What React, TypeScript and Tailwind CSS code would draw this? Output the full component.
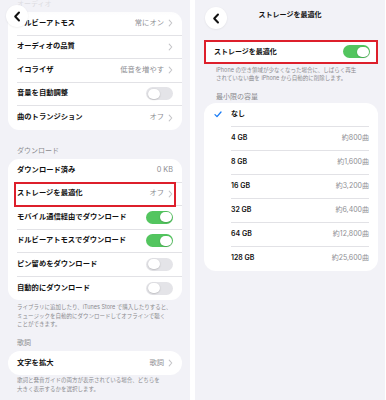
import React from "react";

const font = {
  fontFamily: '"Inter", "Noto Sans CJK JP", sans-serif',
};

const Toggle = ({ on }: { on: boolean }) => (
  <div
    className={`flex h-[13px] w-[27px] items-center rounded-full p-[1.5px] ${
      on ? "justify-end bg-[#53c55f]" : "justify-start bg-[#e4e4e8]"
    }`}
  >
    <div className="h-[10px] w-[12px] rounded-full bg-white shadow-[0_0.5px_1.5px_rgba(0,0,0,0.25)]" />
  </div>
);

const Chevron = () => (
  <svg width="5" height="8" viewBox="0 0 5 8" className="ml-[4px]">
    <path d="M1.2 1.2L3.8 4L1.2 6.8" fill="none" stroke="#c4c4c8" strokeWidth="1.1" strokeLinecap="round" strokeLinejoin="round" />
  </svg>
);

const BackButton = () => (
  <div className="flex h-[22px] w-[22px] items-center justify-center rounded-full bg-white shadow-[0_0.5px_2px_rgba(0,0,0,0.08)]">
    <svg width="8" height="11" viewBox="0 0 8 11">
      <path d="M6 1.5L2.2 5.5L6 9.5" fill="none" stroke="#111" strokeWidth="2" strokeLinecap="round" strokeLinejoin="round" />
    </svg>
  </div>
);

interface RowProps {
  label: string;
  value?: string;
  chevron?: boolean;
  toggle?: boolean;
  on?: boolean;
  last?: boolean;
  marked?: boolean;
}

const Row: React.FC<RowProps> = ({ label, value, chevron, toggle, on, last, marked }) => (
  <div className="relative flex h-[23.5px] items-stretch pl-[9px]">
    <div
      className={`flex flex-1 items-center pr-[9px] ${
        last ? "" : "border-b-[0.5px] border-[#e2e2e6]"
      }`}
    >
      <span className="flex-1 text-[7.3px] font-semibold text-[#111]">{label}</span>
      {value && <span className="text-[7.3px] text-[#8e8e93]">{value}</span>}
      {chevron && <Chevron />}
      {toggle && <Toggle on={!!on} />}
    </div>
    {marked && (
      <div className="absolute inset-y-[-0.5px] left-[6px] right-[6px] border-2 border-[#dd1f2b]" />
    )}
  </div>
);

const Header = ({ children, className }: { children: React.ReactNode; className: string }) => (
  <div className={`flex items-end px-[17px] text-[7px] leading-[8px] text-[#8a8a8e] ${className}`}>
    {children}
  </div>
);

const Note = ({ lines, className }: { lines: string[]; className: string }) => (
  <div className={`text-[5.5px] leading-[8.5px] text-[#8a8a8e] ${className}`}>
    {lines.map((l) => (
      <div key={l} className="whitespace-nowrap">
        {l}
      </div>
    ))}
  </div>
);

const sizes = [
  ["4 GB", "約800曲"],
  ["8 GB", "約1,600曲"],
  ["16 GB", "約3,200曲"],
  ["32 GB", "約6,400曲"],
  ["64 GB", "約12,800曲"],
  ["128 GB", "約25,600曲"],
];

const LeftScreen = () => (
  <div className="relative h-full w-[190px] overflow-hidden bg-[#f2f2f7]">
    <div className="h-[12px] px-[17px] text-[7px] leading-[8px] text-[#c2c2c6]">オーディオ</div>
    <div className="mx-[8px] overflow-hidden rounded-[11px] bg-white">
      <Row label="ドルビーアトモス" value="常にオン" chevron />
      <Row label="オーディオの品質" chevron />
      <Row label="イコライザ" value="低音を増やす" chevron />
      <Row label="音量を自動調整" toggle />
      <Row label="曲のトランジション" value="オフ" chevron last />
    </div>

    <Header className="h-[29.5px] pb-[4px]">ダウンロード</Header>
    <div className="mx-[8px] rounded-[11px] bg-white">
      <Row label="ダウンロード済み" value="0 KB" />
      <Row label="ストレージを最適化" value="オフ" chevron marked />
      <Row label="モバイル通信経由でダウンロード" toggle on />
      <Row label="ドルビーアトモスでダウンロード" toggle on />
      <Row label="ピン留めをダウンロード" toggle />
      <Row label="自動的にダウンロード" toggle last />
    </div>
    <Note
      className="px-[17px] pt-[3px]"
      lines={[
        "ライブラリに追加したり、iTunes Store で購入したりすると、",
        "ミュージックを自動的にダウンロードしてオフラインで聴く",
        "ことができます。",
      ]}
    />

    <Header className="h-[22.5px] pb-[4px]">歌詞</Header>
    <div className="mx-[8px] rounded-[12px] bg-white">
      <div className="flex h-[24px] items-center px-[9px]">
        <span className="flex-1 text-[7.3px] font-semibold text-[#111]">文字を拡大</span>
        <span className="text-[7.3px] text-[#8e8e93]">歌詞</span>
        <Chevron />
      </div>
    </div>
    <Note
      className="px-[17px] pt-[1px]"
      lines={[
        "歌詞と発音ガイドの両方が表示されている場合、どちらを",
        "大きく表示するかを選択します。",
      ]}
    />

    <div className="absolute inset-x-0 top-0 h-[16px] bg-gradient-to-b from-[#f2f2f7]/70 to-transparent" />
    <div className="absolute left-[6px] top-[5px]">
      <BackButton />
    </div>
  </div>
);

const RightScreen = () => (
  <div className="h-full w-[190px] overflow-hidden bg-[#f2f2f7]">
    <div className="flex h-[40px] items-start">
      <div className="ml-[10px] mt-[7px]">
        <BackButton />
      </div>
      <div className="mt-[11px] flex-1 pr-[32px] text-center text-[7px] font-semibold leading-[8px] text-[#111]">
        ストレージを最適化
      </div>
    </div>

    <div className="ml-[9px] mr-[7px] flex h-[23.5px] items-center border-2 border-[#dd1f2b] bg-white pl-[8px] pr-[6px]">
      <span className="flex-1 text-[7px] font-semibold text-[#111]">ストレージを最適化</span>
      <Toggle on />
    </div>
    <Note
      className="pl-[21px] pt-[2.5px] leading-[8px]"
      lines={[
        "iPhone の空き領域が少なくなった場合に、しばらく再生",
        "されていない曲を iPhone から自動的に削除します。",
      ]}
    />

    <div className="mt-[10.5px] pl-[21px] text-[7px] leading-[8px] text-[#8a8a8e]">最小限の容量</div>

    <div className="ml-[9px] mr-[7px] mt-[2px] rounded-[12px] bg-white">
      <div className="flex h-[24px] items-center">
        <div className="flex w-[27px] justify-center pl-[1px]">
          <svg width="8" height="7" viewBox="0 0 8 7">
            <path d="M1 3.6L3 5.6L7 1" fill="none" stroke="#1a7cf5" strokeWidth="1.3" strokeLinecap="round" strokeLinejoin="round" />
          </svg>
        </div>
        <div className="flex h-full flex-1 items-center border-b-[0.5px] border-[#e2e2e6] mr-[9px]">
          <span className="text-[7px] font-semibold text-[#111]">なし</span>
        </div>
      </div>
      {sizes.map(([size, songs], i) => (
        <div key={size} className="flex h-[24px] items-center pl-[27px]">
          <div
            className={`flex h-full flex-1 items-center mr-[9px] ${
              i === sizes.length - 1 ? "" : "border-b-[0.5px] border-[#e2e2e6]"
            }`}
          >
            <span className="flex-1 text-[7px] font-semibold text-[#111]">{size}</span>
            <span className="text-[7px] text-[#8e8e93]">{songs}</span>
          </div>
        </div>
      ))}
    </div>
  </div>
);

export default function App() {
  return (
    <div className="flex h-[400px] w-[386px] bg-white" style={font}>
      <LeftScreen />
      <div className="w-[5px]" />
      <RightScreen />
    </div>
  );
}
